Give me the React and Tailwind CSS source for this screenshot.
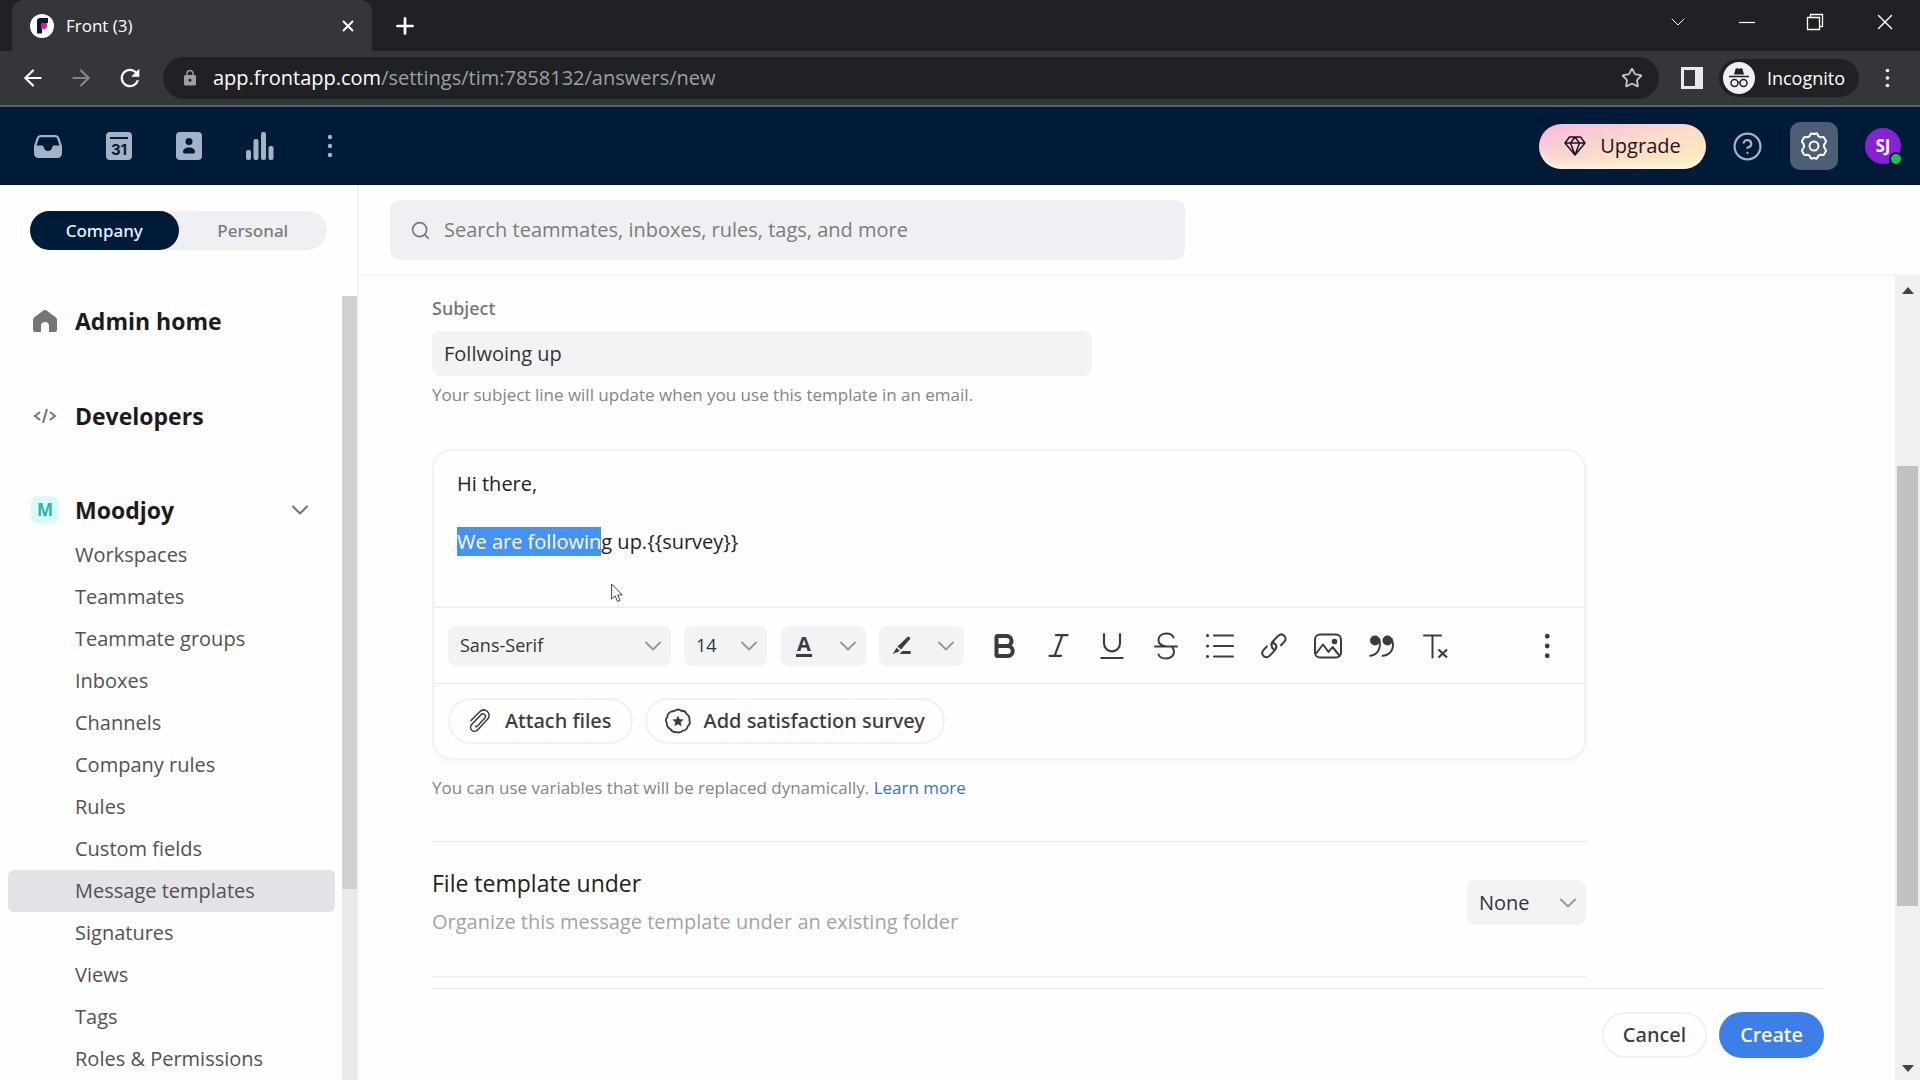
import { useState } from "react";
import {
  ArrowLeft,
  ArrowRight,
  Bold,
  ChevronDown,
  CircleQuestionMark,
  Italic,
  Plus,
  Search,
  Star,
  X,
} from "lucide-react";
import { FiUnderline } from "react-icons/fi";
import { MdLock, MdRefresh } from "react-icons/md";

const menuItems = [
  "Workspaces",
  "Teammates",
  "Teammate groups",
  "Inboxes",
  "Channels",
  "Company rules",
  "Rules",
  "Custom fields",
  "Message templates",
  "Signatures",
  "Views",
  "Tags",
  "Roles & Permissions",
];

function Dots({ className }) {
  return (
    <svg viewBox="0 0 6 24" className={className} fill="currentColor">
      <circle cx="3" cy="3" r="2.2" />
      <circle cx="3" cy="12" r="2.2" />
      <circle cx="3" cy="21" r="2.2" />
    </svg>
  );
}

function FrontLogo() {
  return (
    <svg viewBox="0 0 24 24" className="size-6">
      <circle cx="12" cy="12" r="12" fill="#fff" />
      <path d="M7 7a3 3 0 0 1 3-3h8v5h-6v10.500H7z" fill="#001b38" />
      <path d="M11 9h6v2.500a3.500 3.500 0 0 1-3.500 3.500H11z" fill="#f0147f" />
    </svg>
  );
}

function InboxIcon() {
  return (
    <svg viewBox="0 0 28 23" className="w-7" fill="currentColor">
      <path
        fillRule="evenodd"
        d="M6.500 0h15a4 4 0 0 1 3.700 2.500L28 11v7.500a4.500 4.500 0 0 1-4.500 4.500h-19A4.500 4.500 0 0 1 0 18.500V11l2.800-8.500A4 4 0 0 1 6.500 0zM6.500 2.200c-.8 0-1.400.4-1.700 1.200L2.500 10.500H8c1.200 0 1.500.8 1.800 2a4.300 4.300 0 0 0 8.400 0c.3-1.200.6-2 1.800-2h5.500l-2.300-7.100c-.3-.8-.9-1.200-1.700-1.200z"
      />
    </svg>
  );
}

function CalendarIcon() {
  return (
    <svg viewBox="0 0 26 28" className="w-[26px]">
      <rect width="26" height="28" rx="4" fill="currentColor" />
      <path d="M4 6h18" stroke="#001b38" strokeWidth="2" />
      <text
        x="13"
        y="23"
        textAnchor="middle"
        fill="#001b38"
        className="font-['Inter'] text-[15px] font-bold"
      >
        31
      </text>
    </svg>
  );
}

function ContactIcon() {
  return (
    <svg viewBox="0 0 26 28" className="w-[26px]">
      <rect width="26" height="28" rx="4" fill="currentColor" />
      <circle cx="13" cy="9.500" r="3.500" fill="#001b38" />
      <path d="M7 20c0-3 2.500-4.500 6-4.500s6 1.500 6 4.500c0 1.200-1 1.500-2 1.500H9c-1 0-2-.3-2-1.500z" fill="#001b38" />
    </svg>
  );
}

function ChartIcon() {
  return (
    <svg viewBox="0 0 28 28" className="w-7" fill="currentColor">
      <rect x="0" y="18" width="5" height="10" rx="2" />
      <rect x="7.500" y="7" width="5" height="21" rx="2" />
      <rect x="15" y="0" width="5" height="28" rx="2" />
      <rect x="22.500" y="14" width="5" height="14" rx="2" />
    </svg>
  );
}

function IncognitoIcon() {
  return (
    <svg viewBox="0 0 32 32" className="size-8">
      <circle cx="16" cy="16" r="16" fill="#eef0f4" />
      <path d="M11 12.500l1.500-5.500c.2-.8.900-1 1.500-.8l2 .6 2-.6c.6-.2 1.300 0 1.500.8l1.500 5.500z" fill="#202124" />
      <path d="M6 14.500h20" stroke="#202124" strokeWidth="1.500" />
      <g fill="none" stroke="#202124" strokeWidth="1.500">
        <circle cx="11.500" cy="21" r="3.500" />
        <circle cx="20.500" cy="21" r="3.500" />
        <path d="M15 20.500c.7-.5 1.300-.5 2 0" />
      </g>
    </svg>
  );
}

function DiamondIcon() {
  return (
    <svg viewBox="0 0 22 20" className="w-[22px]" fill="none" stroke="currentColor" strokeWidth="1.500" strokeLinejoin="round">
      <path d="M5.500 1h11L21 7 11 19 1 7zM1 7h20M11 1L6.500 7 11 19l4.500-12z" />
    </svg>
  );
}

function GearIcon() {
  return (
    <svg viewBox="0 0 28 28" className="size-7" fill="none" stroke="currentColor" strokeWidth="2" strokeLinejoin="round">
      <circle cx="14" cy="14" r="4.500" />
      <path d="M10.600 2.200c.3-.7 1-1 1.600-.7a4.300 4.300 0 0 0 3.600 0c.7-.3 1.300 0 1.600.7.700 2.300 2.200 3.500 5 2.900.8-.2 1.300 0 1.700.7l1.700 3c.3.600.2 1.100-.2 1.600-1.900 2.100-1.900 5.100 0 7.200.4.500.5 1 .2 1.600l-1.700 3c-.4.700-.9.900-1.700.7-2.800-.6-4.300.6-5 2.900-.3.700-.9 1-1.600.7a4.300 4.300 0 0 0-3.600 0c-.6.300-1.300 0-1.600-.7-.7-2.300-2.200-3.500-5-2.900-.8.200-1.300 0-1.700-.7l-1.700-3c-.3-.6-.2-1.100.2-1.600 1.900-2.100 1.900-5.100 0-7.200-.4-.5-.5-1-.2-1.600l1.700-3c.4-.7.9-.9 1.700-.7 2.800.6 4.300-.6 5-2.900z" />
    </svg>
  );
}

function HomeIcon() {
  return (
    <svg viewBox="0 0 24 22" className="w-6" fill="#757575">
      <path d="M10.400.6a2.500 2.500 0 0 1 3.200 0l8.700 6.400c1 .8 1.700 1.700 1.700 3V20a2 2 0 0 1-2 2h-6v-6a4 4 0 0 0-8 0v6H2a2 2 0 0 1-2-2V10c0-1.300.7-2.200 1.700-3z" />
    </svg>
  );
}

function CodeIcon() {
  return (
    <svg viewBox="0 0 24 14" className="w-6" fill="none" stroke="#757575" strokeWidth="2">
      <path d="M7 3L2 7l5 4M17 3l5 4-5 4M14 0l-4 14" />
    </svg>
  );
}

function HighlightIcon() {
  return (
    <svg viewBox="0 0 20 20" className="size-5" fill="currentColor">
      <path d="M17.500 1.200c.8.800.8 1.500.2 2.300L9 13.500l-3.500-3L15.200 1.200c.8-.6 1.600-.6 2.300 0zM4.500 11.800l3 2.600c-.8 1.600-2 2-3.500 2L.8 18zM10.500 15h8.200v3H7.500z" />
    </svg>
  );
}

function StrikeIcon() {
  return (
    <svg viewBox="0 0 24 28" className="h-7 w-6" fill="none" stroke="currentColor" strokeWidth="2" strokeLinecap="round">
      <path d="M19.500 5.500C18.500 3 16 1.500 12.500 1.500 8 1.500 4.500 4 4.500 8c0 4 3 5.500 7 6.200M1 14.500h22M4.500 22.500c1 2.500 3.500 4 7.500 4 5 0 8-3 8-6.500 0-2-.6-3.500-1.500-4.500" />
    </svg>
  );
}

function ListIcon() {
  return (
    <svg viewBox="0 0 28 24" className="w-7" fill="none" stroke="currentColor" strokeWidth="2" strokeLinecap="round">
      <path d="M8 1.500h19M8 12h19M8 22.500h19" />
      <path d="M1.500 1.500h.1M1.500 12h.1M1.500 22.500h.1" strokeWidth="3" />
    </svg>
  );
}

function LinkIcon() {
  return (
    <svg viewBox="0 0 26 26" className="size-[26px]" fill="none" stroke="currentColor" strokeWidth="2" strokeLinecap="round">
      <path d="M10.500 11.500c0-1.300.6-2.300 1.500-3.200l5-5.200c2-2 4.500-2 6.200-.4 1.800 1.700 1.800 4.300 0 6.200L20 12.300M12.500 10c1.600.6 2.800 2 2.800 4" />
      <path d="M15.300 14c0 1.500-.6 2.500-1.500 3.400L8.800 22.600c-2 2-4.500 2-6.200.4-1.700-1.700-1.700-4.200 0-6.200l3.300-3.400M13 16.500c-1.600-.8-2.500-2.500-2.500-5" />
    </svg>
  );
}

function ImageIcon() {
  return (
    <svg viewBox="0 0 28 26" className="w-7" fill="none" stroke="currentColor" strokeWidth="2" strokeLinejoin="round" strokeLinecap="round">
      <rect x="1" y="1.500" width="26" height="23" rx="5" />
      <path d="M2.500 20L9 11.500l5.500 7.500 4-5 6.500 8" />
      <circle cx="20.500" cy="8.500" r="2.800" fill="currentColor" stroke="none" />
    </svg>
  );
}

function QuoteIcon() {
  return (
    <svg viewBox="0 0 26 22" className="w-[26px]">
      <g fill="currentColor">
        <circle cx="6" cy="5.500" r="5" />
        <circle cx="18.500" cy="5.500" r="5" />
      </g>
      <g fill="none" stroke="currentColor" strokeWidth="2" strokeLinecap="round">
        <path d="M10.200 4c2.400 9-1.500 16-9 16.800" />
        <path d="M22.700 4c3.600 9-.8 16-9 16.800" />
      </g>
    </svg>
  );
}

function ClearFormatIcon() {
  return (
    <svg viewBox="0 0 26 26" className="size-[26px]" fill="none" stroke="currentColor" strokeWidth="2">
      <path d="M1 2.500h17M9.500 2.500v22" strokeLinecap="round" />
      <path d="M15.500 16.500l8.500 8M24 16.500l-8.500 8" strokeWidth="2.200" />
    </svg>
  );
}

function PaperclipIcon() {
  return (
    <svg viewBox="0 0 22 24" className="w-[22px]" fill="none" stroke="currentColor" strokeWidth="1.500" strokeLinecap="round">
      <path d="M2 11.500L10.500 3c2.400-2.400 5.600-2.500 7.900-.5 2.300 2.100 2.300 5.500.1 7.800L8.800 20.800c-1.700 1.800-4.300 1.900-6 .4-1.600-1.500-1.600-4-.1-5.600l9.300-9.900c1-1.100 2.600-1.200 3.600-.2 1.100 1 1.100 2.600.1 3.700l-7.500 8c-.5.500-1.200.5-1.700.1" />
    </svg>
  );
}

function SurveyIcon() {
  return (
    <svg viewBox="0 0 26 26" className="size-[26px]">
      <path
        d="M9.800 2.800Q13 .200 16.200 2.800Q20.300 2.300 21.700 6.200Q25.300 8.100 24.300 12Q26 15.700 22.800 18.100Q22 22.100 17.900 22.600Q14.900 25.400 11.400 24Q7.300 24.600 5.400 21Q1.600 19.400 1.900 15.300Q-.3 11.900 2.400 8.800Q2.600 4.700 6.400 3.500z"
        fill="none"
        stroke="currentColor"
        strokeWidth="1.800"
        strokeLinejoin="round"
      />
      <path d="M13 7.500l1.700 3.700 4 .4-3 2.700.9 4-3.600-2.100-3.600 2.100.9-4-3-2.700 4-.4z" fill="currentColor" />
    </svg>
  );
}

function Picker({ label, options, className, selectClass }) {
  return (
    <div className={`relative flex rounded-lg bg-[#f2f3f5] ${className}`}>
      <select
        aria-label={label}
        className={`w-full appearance-none rounded-lg bg-transparent pl-3 text-[#333] ${selectClass}`}
      >
        {options.map((option) => (
          <option key={option}>{option}</option>
        ))}
      </select>
      <ChevronDown
        className="pointer-events-none absolute top-1/2 right-1 size-7 -translate-y-1/2 text-[#999]"
        strokeWidth={1.700}
      />
    </div>
  );
}

function ToolButton({ label, children }) {
  return (
    <button aria-label={label} className="flex h-10 w-[54px] items-center justify-center">
      {children}
    </button>
  );
}

function BrowserChrome() {
  return (
    <div className="shrink-0 border-b-2 border-[#5b6066] bg-[#35363a] text-white">
      <div className="flex h-[51px] items-stretch bg-[#202124]">
        <div className="w-3 rounded-br-xl bg-[#202124]" />
        <div className="flex w-[360px] items-center rounded-t-xl bg-[#35363a] pr-[15px] pl-[18px]">
          <FrontLogo />
          <span className="ml-3 text-[17px]">Front (3)</span>
          <button aria-label="Close tab" className="ml-auto">
            <X className="size-[18px]" strokeWidth={2.500} />
          </button>
        </div>
        <button aria-label="New tab" className="ml-5">
          <Plus className="size-[26px]" strokeWidth={2.500} />
        </button>
        <div className="ml-auto flex items-center gap-[46px] pr-[22px] pb-2">
          <button aria-label="Search tabs">
            <ChevronDown className="size-6" strokeWidth={1} />
          </button>
          <button aria-label="Minimize">
            <svg viewBox="0 0 22 22" className="size-[22px]" stroke="currentColor">
              <path d="M3 11.500h16" strokeWidth="1.200" />
            </svg>
          </button>
          <button aria-label="Restore">
            <svg viewBox="0 0 22 22" className="size-[22px]" fill="none" stroke="currentColor" strokeWidth="1.300">
              <path d="M3.500 6.500h12v12h-12zM6.500 6.500v-3h12v12h-3" />
            </svg>
          </button>
          <button aria-label="Close window">
            <X className="size-[26px]" strokeWidth={1.300} />
          </button>
        </div>
      </div>
      <div className="flex h-[54px] items-center">
        <div className="flex items-center gap-[22px] pl-5">
          <button aria-label="Back">
            <ArrowLeft className="size-[26px]" />
          </button>
          <button aria-label="Forward" className="text-[#85868a]">
            <ArrowRight className="size-[26px]" />
          </button>
          <button aria-label="Reload">
            <MdRefresh className="size-7" />
          </button>
        </div>
        <div className="ml-[19px] flex h-[42px] flex-1 items-center rounded-full bg-[#202124] pr-4 pl-[18px]">
          <MdLock className="size-[18px] text-[#9aa0a6]" />
          <p className="ml-[14px] text-[20px] text-[#9aa0a6]">
            <span className="text-white">app.frontapp.com</span>/settings/tim:7858132/answers/new
          </p>
          <button aria-label="Bookmark" className="ml-auto text-[#c4c7cb]">
            <Star className="size-[22px]" />
          </button>
        </div>
        <button aria-label="Side panel" className="ml-[22px]">
          <svg viewBox="0 0 22 22" className="size-[22px]">
            <path fillRule="evenodd" d="M0 0h22v22H0zM3 3v16h11V3z" fill="#e8eaed" />
          </svg>
        </button>
        <div className="ml-4 flex h-[38px] items-center gap-3 rounded-full bg-[#202124] pr-[14px] pl-1">
          <IncognitoIcon />
          <span className="text-[18px]">Incognito</span>
        </div>
        <button aria-label="Browser menu" className="mr-[30px] ml-[26px]">
          <Dots className="h-5" />
        </button>
      </div>
    </div>
  );
}

function TopNav() {
  return (
    <header className="flex h-[78px] shrink-0 items-center bg-[#001b38] pl-[34px] text-[#a3b2c5]">
      <nav className="flex items-center gap-11">
        <button aria-label="Inbox"><InboxIcon /></button>
        <button aria-label="Calendar"><CalendarIcon /></button>
        <button aria-label="Contacts"><ContactIcon /></button>
        <button aria-label="Analytics"><ChartIcon /></button>
        <button aria-label="More" className="pl-[9px]"><Dots className="h-6" /></button>
      </nav>
      <button className="ml-auto flex h-[45px] w-[167px] items-center justify-center gap-[14px] rounded-full bg-linear-to-br from-[#f9b6e4] via-[#fbdcc8] to-[#fdeeb4] text-[20px] text-[#1e1420] shadow-[inset_0_-10px_10px_-6px_#ffffffb0]">
        <DiamondIcon />
        Upgrade
      </button>
      <button aria-label="Help" className="ml-[26px]">
        <CircleQuestionMark className="size-[31px]" strokeWidth={1.700} />
      </button>
      <button aria-label="Settings" className="ml-[27px] flex size-12 items-center justify-center rounded-[10px] bg-[#4c5d76] text-white">
        <GearIcon />
      </button>
      <button aria-label="Account" className="relative mr-[19px] ml-[27px] size-9 rounded-full bg-[#8a1fd8] text-[17px] font-bold text-white">
        SJ
        <span className="absolute -right-0.5 -bottom-0.5 size-[14px] rounded-full border-2 border-[#001b38] bg-[#1cc24c]" />
      </button>
    </header>
  );
}

function Sidebar() {
  const [active, setActive] = useState("Message templates");

  return (
    <aside className="flex w-[359px] shrink-0 flex-col border-r-2 border-[#f3f3f5]">
      <div className="mt-[26px] mb-[46px] ml-[30px] flex h-[39px] w-[297px] rounded-full bg-[#eff0f3] font-['Noto_Sans'] text-[17px] font-medium">
        <button className="h-full flex-1 rounded-full bg-[#001b38] text-[#e4f3ff]">Company</button>
        <button className="h-full flex-1 text-[#7c7c7c]">Personal</button>
      </div>
      <div className="flex min-h-0 flex-1">
        <nav className="min-w-0 flex-1 overflow-hidden pr-[7px] pl-2">
          <a href="#home" className="flex h-[50px] items-center gap-[18px] pl-[25px] text-[23px] font-bold text-[#1b1b1b]">
            <HomeIcon />
            Admin home
          </a>
          <a href="#developers" className="mt-[45px] flex h-[50px] items-center gap-[18px] pl-[25px] text-[23px] font-bold text-[#1b1b1b]">
            <CodeIcon />
            Developers
          </a>
          <button className="mt-[44px] flex h-[50px] w-full items-center gap-[16px] pr-[21px] pl-[23px] text-[23px] font-bold text-[#1b1b1b]">
            <span className="flex size-7 items-center justify-center rounded-lg bg-[#d8fbf8] text-[17px] text-[#2bb3a3]">
              M
            </span>
            Moodjoy
            <ChevronDown className="ml-auto size-7 text-[#757575]" strokeWidth={1.800} />
          </button>
          <ul className="-mt-px">
            {menuItems.map((item) => (
              <li key={item}>
                <button
                  onClick={() => setActive(item)}
                  className={`h-[42px] w-full rounded-md pl-[67px] text-left text-[20px] text-[#525252] ${
                    item === active ? "bg-[#e2e3e7]" : ""
                  }`}
                >
                  {item}
                </button>
              </li>
            ))}
          </ul>
        </nav>
        <div className="w-[15px] bg-[#e9e9e9]">
          <div className="h-[593px] bg-[#d0d0d0]" />
        </div>
      </div>
    </aside>
  );
}

function Editor() {
  return (
    <div className="mt-[42px] rounded-[20px] border-2 border-[#f2f2f3] shadow-[0_3px_8px_#00000008]">
      <div className="relative">
        <div
          role="textbox"
          aria-label="Message body"
          contentEditable
          suppressContentEditableWarning
          className="h-[156px] px-[23px] pt-[18px] text-[20px] leading-[29px] text-[#222] outline-none"
        >
          <p>Hi there,</p>
          <p>
            <br />
          </p>
          <p>
            <span className="inline-block bg-[#4492fa] text-white">We are followin</span>g up.{"{{survey}}"}
          </p>
        </div>
        <svg viewBox="0 0 12 20" className="absolute top-[132px] left-[177px] h-5 w-3">
          <path d="M.6 1v15l3.500-3.200 2.400 5.700 2.600-1.100L6.700 12h4.600z" fill="#fff" stroke="#444" />
        </svg>
      </div>
      <div className="flex h-[77px] items-center border-y border-[#e8e8ea] pl-[14px] text-[#3c3c3c]">
        <Picker label="Font" options={["Sans-Serif", "Serif"]} className="w-[223px]" selectClass="h-10 text-[18px]" />
        <Picker label="Font size" options={["14", "16", "18"]} className="ml-[13px] w-[83px]" selectClass="h-10 text-[18px]" />
        <button aria-label="Text color" className="ml-[14px] flex h-10 w-[85px] items-center justify-between rounded-lg bg-[#f2f3f5] pr-1 pl-[15px]">
          <span className="border-b-[3px] border-[#3c3c3c] px-px text-[20px] leading-[20px] font-bold">A</span>
          <ChevronDown className="size-7 text-[#999]" strokeWidth={1.700} />
        </button>
        <button aria-label="Highlight color" className="ml-[13px] flex h-10 w-[85px] items-center justify-between rounded-lg bg-[#f2f3f5] pr-1 pl-[13px]">
          <HighlightIcon />
          <ChevronDown className="size-7 text-[#999]" strokeWidth={1.700} />
        </button>
        <div className="ml-[13px] flex">
          <ToolButton label="Bold"><Bold className="size-[30px]" strokeWidth={3.200} /></ToolButton>
          <ToolButton label="Italic"><Italic className="size-[31px]" strokeWidth={1.700} /></ToolButton>
          <ToolButton label="Underline"><FiUnderline className="size-[32px]" strokeWidth={1.600} /></ToolButton>
          <ToolButton label="Strikethrough"><StrikeIcon /></ToolButton>
          <ToolButton label="Bulleted list"><ListIcon /></ToolButton>
          <ToolButton label="Insert link"><LinkIcon /></ToolButton>
          <ToolButton label="Insert image"><ImageIcon /></ToolButton>
          <ToolButton label="Quote"><QuoteIcon /></ToolButton>
          <ToolButton label="Clear formatting"><ClearFormatIcon /></ToolButton>
        </div>
        <button aria-label="More options" className="mr-[34px] ml-auto">
          <Dots className="h-[26px]" />
        </button>
      </div>
      <div className="flex h-[74px] items-center gap-3 pl-[14px] font-['Noto_Sans'] text-[20px] font-medium text-[#3c3c3c]">
        <button className="flex h-[46px] items-center gap-[14px] rounded-full border-2 border-[#f1f1f2] px-[19px]">
          <PaperclipIcon />
          Attach files
        </button>
        <button className="flex h-[46px] items-center gap-[13px] rounded-full border-2 border-[#f1f1f2] px-[18px]">
          <SurveyIcon />
          Add satisfaction survey
        </button>
      </div>
    </div>
  );
}

export default function App() {
  const [subject, setSubject] = useState("Follwoing up");

  return (
    <div className="flex h-screen flex-col overflow-hidden bg-[#fefefe] font-['Open_Sans','Noto_Sans',sans-serif]">
      <BrowserChrome />
      <TopNav />
      <div className="flex min-h-0 flex-1">
        <Sidebar />
        <main className="flex min-w-0 flex-1 flex-col">
          <div className="border-b-2 border-[#f5f5f6] pt-[15px] pb-[14px] pl-[31px]">
            <label className="flex h-[60px] w-[795px] max-w-full items-center gap-[13px] rounded-[10px] bg-[#eff0f3] pl-5">
              <Search className="size-[21px] text-[#777]" strokeWidth={1.800} />
              <input
                type="search"
                aria-label="Search"
                placeholder="Search teammates, inboxes, rules, tags, and more"
                className="flex-1 bg-transparent text-[20px] outline-none placeholder:text-[#7c7c7c]"
              />
            </label>
          </div>
          <div className="flex min-h-0 flex-1">
            <div className="flex min-w-0 flex-1 flex-col pr-[71px] pl-[73px]">
              <div className="w-full max-w-[1154px] pt-[20px]">
                <label htmlFor="subject" className="block font-['Noto_Sans'] text-[18px] leading-[24px] font-medium text-[#757575]">
                  Subject
                </label>
                <input
                  id="subject"
                  value={subject}
                  onChange={(e) => setSubject(e.target.value)}
                  className="mt-[11px] block h-[45px] w-[660px] max-w-full rounded-lg bg-[#f2f3f5] px-3 text-[20px] text-[#333] outline-none"
                />
                <p className="mt-[7px] text-[17px] leading-[24px] text-[#858585]">
                  Your subject line will update when you use this template in an email.
                </p>
                <Editor />
                <p className="mt-[16px] text-[17px] leading-[24px] text-[#858585]">
                  You can use variables that will be replaced dynamically.{" "}
                  <a href="#variables" className="text-[#3b71c0]">Learn more</a>
                </p>
                <div className="mt-[41px] flex items-center border-y border-[#e8e8ea] pt-[24px] pb-[37px]">
                  <div>
                    <h2 className="text-[23px] leading-[34px] text-[#222]">File template under</h2>
                    <p className="mt-[5px] text-[20px] leading-[34px] text-[#a3a3a3]">
                      Organize this message template under an existing folder
                    </p>
                  </div>
                  <Picker label="Folder" options={["None"]} className="ml-auto w-[119px]" selectClass="h-[45px] text-[20px]" />
                </div>
              </div>
              <div className="mt-[11px] flex items-start justify-end gap-3 border-t border-[#e8e8ea] pt-[23px] font-['Noto_Sans'] text-[20px] font-medium">
                <button className="h-[46px] rounded-full border-2 border-[#f1f1f2] px-[19px] text-[#3c3c3c]">Cancel</button>
                <button className="h-[46px] rounded-full bg-[#3d7fe8] px-[21px] text-white">Create</button>
              </div>
            </div>
            <div className="flex w-[25px] flex-col items-center justify-between bg-[#f0f0f2] pt-[11px] pb-2 text-[#444]">
              <svg viewBox="0 0 12 7" className="w-3" fill="currentColor">
                <path d="M6 0l6 7H0z" />
              </svg>
              <div className="flex w-[21px] flex-1 flex-col pt-[172px]">
                <div className="h-[440px] bg-[#c1c1c1]" />
              </div>
              <svg viewBox="0 0 12 7" className="w-3" fill="currentColor">
                <path d="M6 7L0 0h12z" />
              </svg>
            </div>
          </div>
        </main>
      </div>
    </div>
  );
}
